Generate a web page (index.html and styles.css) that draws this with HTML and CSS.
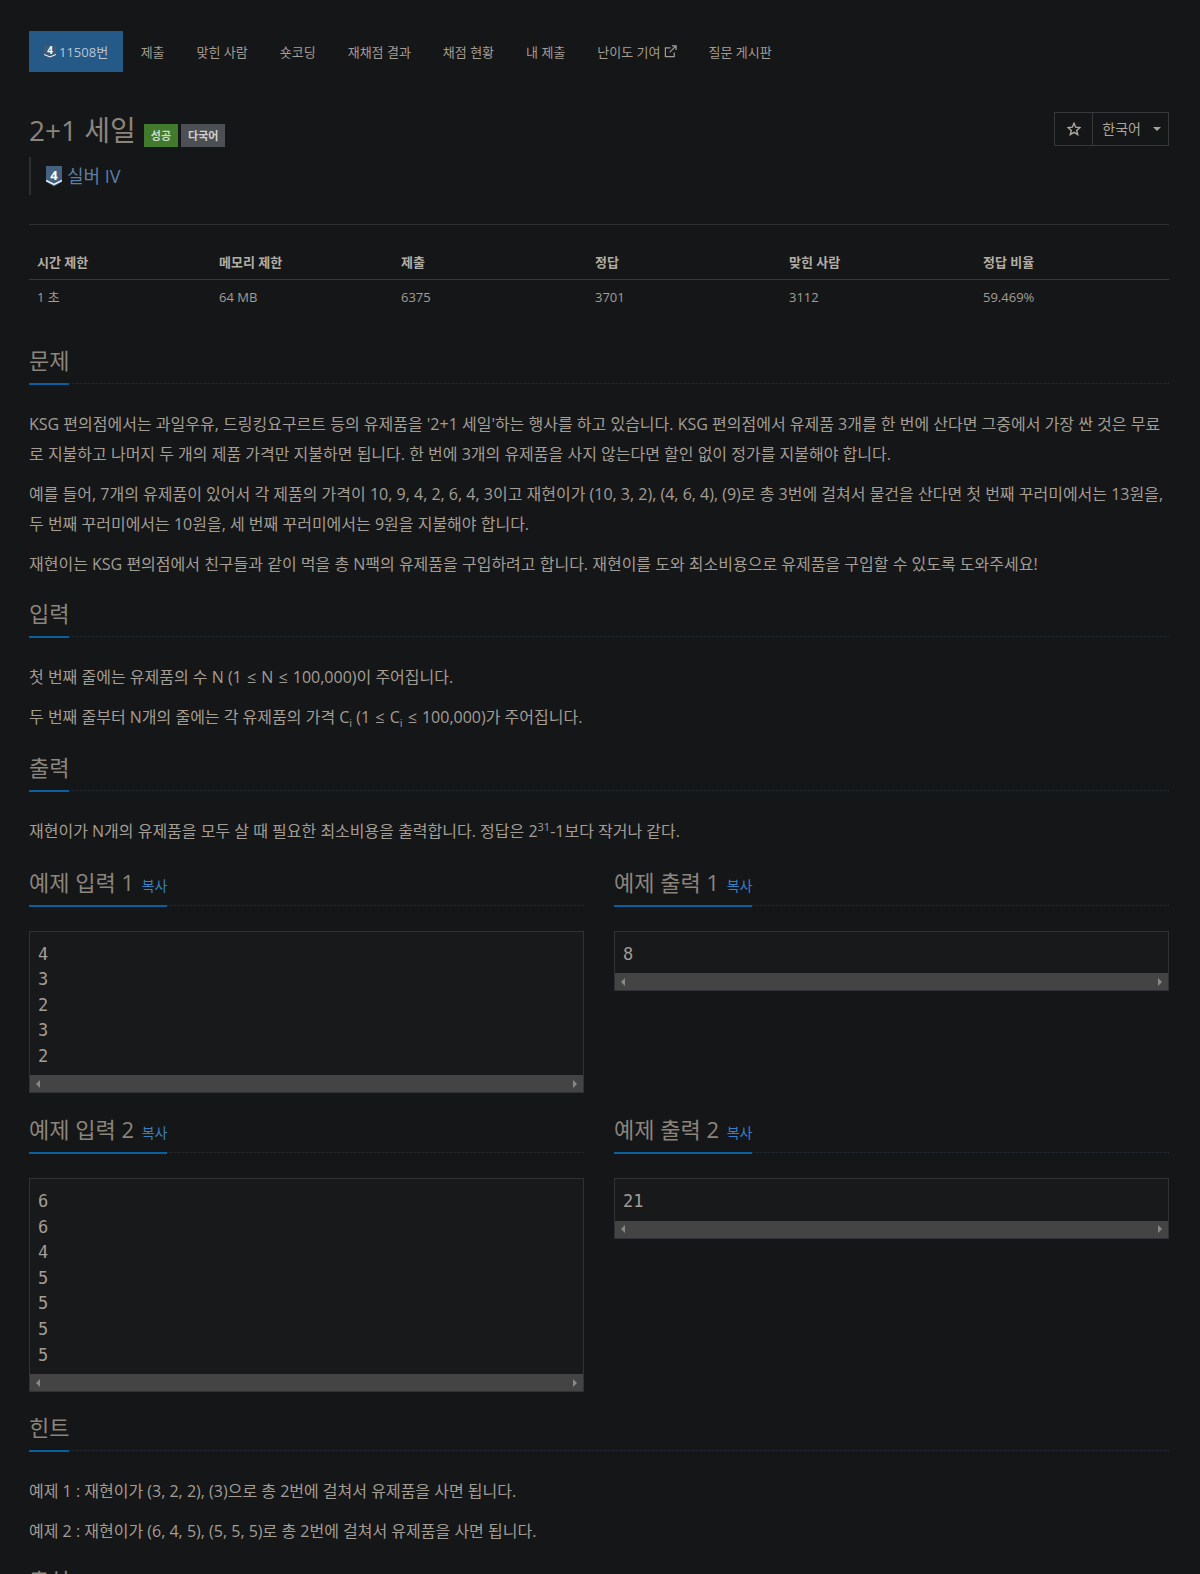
FILE: index.html
```html
<!DOCTYPE html>
<html lang="ko">
<head>
<meta charset="UTF-8">
<title>11508번: 2+1 세일</title>
<link rel="stylesheet" href="styles.css">
</head>
<body>

<div class="container">
  <ul class="tabs">
    <li class="tab active">
      <svg class="tier tier-small" viewBox="0 0 16 18"><path class="tier-base" d="M0 0H16V13L8 17L0 13Z"/><path class="tier-line" d="M0 12.2L8 15.6L16 12.2"/><text class="tier-num" x="8" y="11.5">4</text></svg>11508번
    </li>
    <li class="tab">제출</li>
    <li class="tab">맞힌 사람</li>
    <li class="tab">숏코딩</li>
    <li class="tab">재채점 결과</li>
    <li class="tab">채점 현황</li>
    <li class="tab">내 제출</li>
    <li class="tab">난이도 기여
      <svg class="ext" viewBox="0 0 14 14"><path d="M11 8V12.5H1.5V3H7M8.5 1H13V5.5M13 1L6 8"/></svg>
    </li>
    <li class="tab">질문 게시판</li>
  </ul>

  <div class="page-header">
    <div class="title-row">
      <h1 class="title">2+1 세일</h1>
      <span class="label label-green">성공</span>
      <span class="label label-gray">다국어</span>
      <div class="btn-group">
        <span class="btn btn-star"><svg class="star" viewBox="0 0 14 14"><path d="M7 1.3L8.7 5.2L12.9 5.6L9.7 8.4L10.7 12.6L7 10.4L3.3 12.6L4.3 8.4L1.1 5.6L5.3 5.2Z"/></svg></span>
        <span class="btn btn-lang">한국어<i class="caret"></i></span>
      </div>
    </div>
    <blockquote class="tier-quote">
      <svg class="tier" viewBox="0 0 16 21"><path class="tier-base" d="M0 0H16V16L8 20.5L0 16Z"/><path class="tier-line" d="M0 14.5L8 18.5L16 14.5"/><text class="tier-num" x="8" y="13.5">4</text></svg>
      <span>실버 IV</span>
    </blockquote>
  </div>

  <table class="info">
    <tr><th>시간 제한</th><th>메모리 제한</th><th>제출</th><th>정답</th><th>맞힌 사람</th><th>정답 비율</th></tr>
    <tr><td>1 초</td><td>64 MB</td><td>6375</td><td>3701</td><td>3112</td><td>59.469%</td></tr>
  </table>

  <section class="section">
    <div class="headline"><h2>문제</h2></div>
    <p>KSG 편의점에서는 과일우유, 드링킹요구르트 등의 유제품을 '2+1 세일'하는 행사를 하고 있습니다. KSG 편의점에서 유제품 3개를 한 번에 산다면 그중에서 가장 싼 것은 무료로 지불하고 나머지 두 개의 제품 가격만 지불하면 됩니다. 한 번에 3개의 유제품을 사지 않는다면 할인 없이 정가를 지불해야 합니다.</p>
    <p>예를 들어, 7개의 유제품이 있어서 각 제품의 가격이 10, 9, 4, 2, 6, 4, 3이고 재현이가 (10, 3, 2), (4, 6, 4), (9)로 총 3번에 걸쳐서 물건을 산다면 첫 번째 꾸러미에서는 13원을, 두 번째 꾸러미에서는 10원을, 세 번째 꾸러미에서는 9원을 지불해야 합니다.</p>
    <p>재현이는 KSG 편의점에서 친구들과 같이 먹을 총 N팩의 유제품을 구입하려고 합니다. 재현이를 도와 최소비용으로 유제품을 구입할 수 있도록 도와주세요!</p>
  </section>

  <section class="section">
    <div class="headline"><h2>입력</h2></div>
    <p>첫 번째 줄에는 유제품의 수 N (1 <span class="le">≤</span> N <span class="le">≤</span> 100,000)이 주어집니다.</p>
    <p>두 번째 줄부터 N개의 줄에는 각 유제품의 가격 C<sub>i</sub> (1 <span class="le">≤</span> C<sub>i</sub> <span class="le">≤</span> 100,000)가 주어집니다.</p>
  </section>

  <section class="section">
    <div class="headline"><h2>출력</h2></div>
    <p>재현이가 N개의 유제품을 모두 살 때 필요한 최소비용을 출력합니다. 정답은 2<sup>31</sup>-1보다 작거나 같다.</p>
  </section>

  <div class="samples">
    <div class="sample">
      <div class="headline"><h2>예제 입력 1 <a class="copy">복사</a></h2></div>
      <div class="sample-box">
        <pre>4
3
2
3
2</pre>
        <div class="scrollbar"><i class="arrow-left"></i><i class="arrow-right"></i></div>
      </div>
    </div>
    <div class="sample">
      <div class="headline"><h2>예제 출력 1 <a class="copy">복사</a></h2></div>
      <div class="sample-box">
        <pre>8</pre>
        <div class="scrollbar"><i class="arrow-left"></i><i class="arrow-right"></i></div>
      </div>
    </div>
    <div class="sample">
      <div class="headline"><h2>예제 입력 2 <a class="copy">복사</a></h2></div>
      <div class="sample-box">
        <pre>6
6
4
5
5
5
5</pre>
        <div class="scrollbar"><i class="arrow-left"></i><i class="arrow-right"></i></div>
      </div>
    </div>
    <div class="sample">
      <div class="headline"><h2>예제 출력 2 <a class="copy">복사</a></h2></div>
      <div class="sample-box">
        <pre>21</pre>
        <div class="scrollbar"><i class="arrow-left"></i><i class="arrow-right"></i></div>
      </div>
    </div>
  </div>

  <section class="section">
    <div class="headline"><h2>힌트</h2></div>
    <p>예제 1 : 재현이가 (3, 2, 2), (3)으로 총 2번에 걸쳐서 유제품을 사면 됩니다.</p>
    <p>예제 2 : 재현이가 (6, 4, 5), (5, 5, 5)로 총 2번에 걸쳐서 유제품을 사면 됩니다.</p>
  </section>

  <section class="section">
    <div class="headline"><h2>출처</h2></div>
  </section>
</div>

</body>
</html>
```

FILE: styles.css
```css
html {
  overflow: hidden;
}

body {
  margin: 0;
  height: 1574px;
  overflow: hidden;
  background-color: #151618;
  color: #a39d94;
  font-family: 'Open Sans', 'Noto Sans CJK KR', sans-serif;
  font-size: 16px;
  line-height: 30px;
}

.container {
  padding: 31px 31px 0 29px;
}

/* tabs */
.tabs {
  display: flex;
  list-style: none;
  margin: 0;
  padding: 0;
}

.tab {
  display: flex;
  align-items: center;
  height: 41px;
  padding: 0 16px;
  font-size: 13px;
  color: #a39d94;
  white-space: nowrap;
}

.tab.active {
  margin-right: 1.5px;
  padding: 0 15px;
  background-color: #255a88;
  color: #b9c6d2;
}

.ext {
  width: 13px;
  height: 13px;
  margin-left: 3px;
  fill: none;
  stroke: #a39d94;
  stroke-width: 1.3;
}

/* tier icon */
.tier {
  width: 16px;
  height: 21px;
  flex: none;
}

.tier-small {
  width: 12px;
  height: 14px;
  margin-right: 3px;
}

.tier-base {
  fill: #44617f;
}

.tier-small .tier-base {
  fill: #3d5a76;
}

.tier-line {
  fill: none;
  stroke: #f2f4f6;
  stroke-width: 1.4;
}

.tier-num {
  fill: #fff;
  font-family: 'Open Sans', sans-serif;
  font-size: 13px;
  font-weight: 700;
  text-anchor: middle;
}

/* header */
.page-header {
  margin-top: 40px;
}

.title-row {
  display: flex;
  align-items: flex-end;
  height: 37px;
}

.title {
  margin: 0 8px 0 0;
  font-size: 28px;
  font-weight: 400;
  line-height: 37px;
  color: #8b857c;
}

.label {
  height: 23px;
  margin-right: 3px;
  margin-bottom: 2px;
  padding: 0 7px;
  font-size: 11px;
  font-weight: 700;
  line-height: 24px;
}

.label-green {
  background-color: #417a2c;
  color: #cfd9c9;
}

.label-gray {
  background-color: #4c5055;
  color: #d2d0cc;
}

.btn-group {
  display: flex;
  align-self: flex-start;
  margin-left: auto;
  border: 1px solid #36383b;
  height: 32px;
}

.btn {
  display: flex;
  align-items: center;
  color: #aba69d;
}

.btn-lang {
  padding: 0 7px 0 9px;
  font-size: 14px;
}

.btn-star {
  width: 38px;
  box-sizing: border-box;
  justify-content: center;
  border-right: 1px solid #36383b;
}

.star {
  width: 14px;
  height: 14px;
  fill: none;
  stroke: #b0aba2;
  stroke-width: 1.4;
}

.caret {
  width: 0;
  height: 0;
  margin-left: 12px;
  border: 4px solid transparent;
  border-top-color: #a8a39a;
  border-bottom: 0;
}

.tier-quote {
  display: flex;
  align-items: center;
  height: 38px;
  margin: 8px 0 0;
  padding-left: 15px;
  gap: 5px;
  border-left: 2px solid #2c2e31;
  font-size: 18px;
  color: #5b7fa5;
}

/* info table */
.info {
  width: 100%;
  margin: 29px 0 24px;
  border-top: 1px solid #2d2f32;
  border-collapse: collapse;
  table-layout: fixed;
  font-size: 13px;
  line-height: 20px;
  color: #a39d94;
}

.info th, .info td {
  padding: 0 8px;
  text-align: left;
}

.info th {
  height: 55px;
  padding-top: 20px;
  box-sizing: border-box;
  font-weight: 700;
  color: #b3aea5;
  border-bottom: 1px solid #36383b;
}

.info td {
  height: 37px;
  padding-bottom: 2px;
  box-sizing: border-box;
}

.info th:nth-child(1) { width: 182px; }
.info th:nth-child(2) { width: 182px; }
.info th:nth-child(3) { width: 194px; }
.info th:nth-child(4) { width: 194px; }
.info th:nth-child(5) { width: 194px; }

/* sections */
.section {
  margin-top: 15.5px;
}

.section p {
  margin: 0 0 10px;
}

.le {
  margin: 0 1px;
}

.headline {
  border-bottom: 1px dotted #2b2f38;
  margin-bottom: 25px;
  height: 42px;
}

.headline h2 {
  display: inline-block;
  height: 42px;
  margin: 0;
  border-bottom: 2px solid #0a5f9f;
  font-size: 22px;
  font-weight: 400;
  line-height: 38px;
  color: #8b857c;
}

.copy {
  margin-left: 2px;
  font-size: 14px;
  color: #3a7fc0;
}

sub, sup {
  font-size: 11px;
  line-height: 0;
}

/* samples */
.samples {
  display: grid;
  grid-template-columns: 1fr 1fr;
  gap: 16.5px 30px;
  align-items: start;
  margin-top: 17px;
}

.sample-box {
  border: 1px solid #303236;
  background-color: #18191b;
}

.sample-box pre {
  margin: 0;
  padding: 10px 8px 6px;
  font-family: 'DejaVu Sans Mono', monospace;
  font-size: 17px;
  line-height: 25.6px;
  color: #a39d94;
}

.scrollbar {
  display: flex;
  align-items: center;
  justify-content: space-between;
  height: 17px;
  padding: 0 6px;
  background-color: #444;
}

.arrow-left, .arrow-right {
  width: 0;
  height: 0;
  border: 4px solid transparent;
}

.arrow-left {
  border-left: 0;
  border-right-color: #888;
}

.arrow-right {
  border-right: 0;
  border-left-color: #888;
}
```
